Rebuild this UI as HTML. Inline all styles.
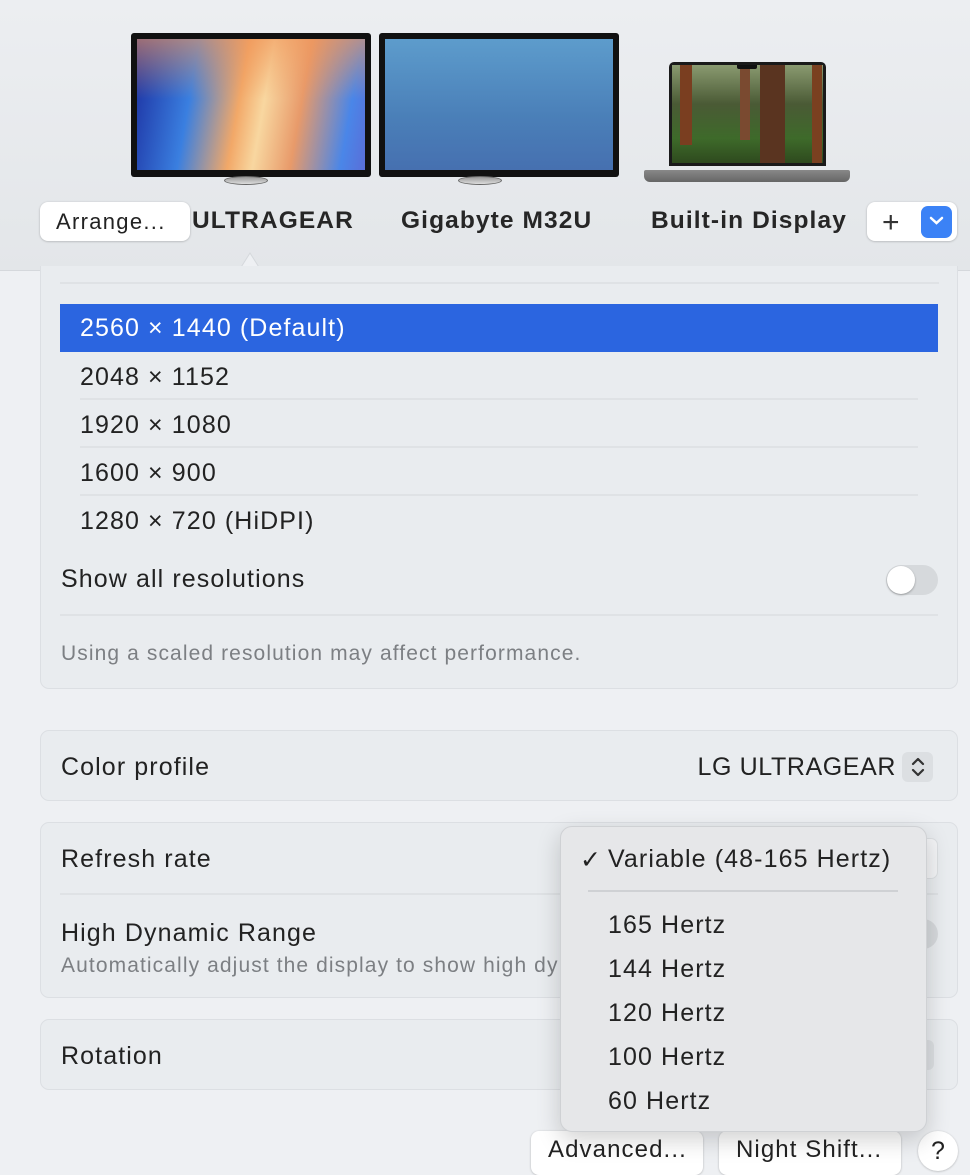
<!DOCTYPE html>
<html><head><meta charset="utf-8"><style>
*{margin:0;padding:0;box-sizing:border-box}
body{width:970px;height:1164px;overflow:hidden;background:#eef0f3;font-family:"Liberation Sans",sans-serif;color:#222;position:relative}
.abs{position:absolute;white-space:nowrap}
.top{left:0;top:0;width:970px;height:271px;background:linear-gradient(#eceef1,#e3e6e9);border-bottom:1px solid #d5d8dc}
.mon{background:#111;border-radius:3px}
.lbl{font-size:24.5px;font-weight:bold;color:#262626;top:207px;letter-spacing:1.1px}
.box{background:#e9ecef;border:1px solid #dcdfe3;border-radius:9px}
.t{font-size:25px;color:#222;letter-spacing:1.1px}
.cap{font-size:21px;color:#7c7f83;letter-spacing:1.1px}
.line{height:2px;background:#dfe2e5}
.btn{background:#fff;border-radius:8px;box-shadow:0 0.5px 2px rgba(0,0,0,.25)}
</style></head><body>
<div class="abs top"></div>
<!-- monitor 1 -->
<div class="abs mon" style="left:131px;top:33px;width:240px;height:144px"></div>
<div class="abs" style="left:137px;top:39px;width:228px;height:131px;background:linear-gradient(100deg,#1c2fa0 0%,#3a7fe0 25%,#f2a868 45%,#f8d7a0 55%,#e89a6a 70%,#4a86e8 90%,#5a6ed8 100%)"></div>
<div class="abs" style="left:137px;top:39px;width:228px;height:60px;background:linear-gradient(180deg,rgba(240,150,90,.6),rgba(0,0,0,0))"></div>
<div class="abs" style="left:224px;top:176px;width:44px;height:9px;border-radius:50%;background:linear-gradient(#999,#ddd);border:1px solid #666"></div>
<!-- monitor 2 -->
<div class="abs mon" style="left:379px;top:33px;width:240px;height:144px"></div>
<div class="abs" style="left:385px;top:39px;width:228px;height:131px;background:linear-gradient(#5d9ccc,#4a7fb8 60%,#4670b0)"></div>
<div class="abs" style="left:458px;top:176px;width:44px;height:9px;border-radius:50%;background:linear-gradient(#999,#ddd);border:1px solid #666"></div>
<!-- laptop -->
<div class="abs" style="left:669px;top:62px;width:157px;height:104px;background:#1a1a1a;border-radius:5px 5px 0 0"></div>
<div class="abs" style="left:672px;top:65px;width:151px;height:98px;background:linear-gradient(#8a9a70 0%,#4a5a35 40%,#3e6a2a 75%,#2e4a1e 100%)"></div>
<div class="abs" style="left:680px;top:65px;width:12px;height:80px;background:#7a3e20"></div>
<div class="abs" style="left:740px;top:65px;width:10px;height:75px;background:#7a4a30"></div>
<div class="abs" style="left:760px;top:65px;width:25px;height:98px;background:#5a3420"></div>
<div class="abs" style="left:812px;top:65px;width:10px;height:98px;background:#7a4020"></div>
<div class="abs" style="left:737px;top:65px;width:20px;height:4px;background:#111;border-radius:0 0 2px 2px"></div>
<div class="abs" style="left:644px;top:170px;width:206px;height:12px;background:linear-gradient(#888,#666);border-radius:2px 2px 6px 6px"></div>
<!-- labels -->
<div class="abs lbl" style="left:192px">ULTRAGEAR</div>
<div class="abs lbl" style="left:401px">Gigabyte M32U</div>
<div class="abs lbl" style="left:651px">Built-in Display</div>
<div class="abs btn" style="left:40px;top:202px;width:150px;height:39px;font-size:22px;letter-spacing:1.3px;padding:7px 0 0 16px">Arrange...</div>
<div class="abs btn" style="left:867px;top:202px;width:90px;height:39px"></div>
<div class="abs" style="left:882px;top:206px;font-size:30px;font-weight:300;color:#333">+</div>
<div class="abs" style="left:921px;top:206px;width:31px;height:32px;background:#3b82f6;border-radius:7px"></div>
<svg class="abs" style="left:929px;top:216px" width="15" height="10"><path d="M2 2 L7.5 7 L13 2" stroke="#fff" stroke-width="2.5" fill="none" stroke-linecap="round"/></svg>
<!-- caret -->
<svg class="abs" style="left:228px;top:251px" width="44" height="22"><path d="M0 21 L10 21 L22 2 L34 21 L44 21" fill="#eef0f3" stroke="#d5d8dc" stroke-width="1"/><rect x="0" y="20.5" width="44" height="2" fill="#eef0f3"/></svg>
<!-- panel -->
<div class="abs box" style="left:40px;top:266px;width:918px;height:423px;border-top:none;border-radius:0 0 9px 9px"></div>
<div class="abs line" style="left:60px;top:282px;width:879px"></div>
<div class="abs" style="left:60px;top:304px;width:878px;height:48px;background:#2b65e0"></div>
<div class="abs t" style="left:80px;top:314px;color:#fff">2560 × 1440 (Default)</div>
<div class="abs t" style="left:80px;top:363px">2048 × 1152</div>
<div class="abs line" style="left:80px;top:398px;width:838px"></div>
<div class="abs t" style="left:80px;top:411px">1920 × 1080</div>
<div class="abs line" style="left:80px;top:446px;width:838px"></div>
<div class="abs t" style="left:80px;top:459px">1600 × 900</div>
<div class="abs line" style="left:80px;top:494px;width:838px"></div>
<div class="abs t" style="left:80px;top:507px">1280 × 720 (HiDPI)</div>
<div class="abs t" style="left:61px;top:565px">Show all resolutions</div>
<div class="abs" style="left:886px;top:565px;width:52px;height:30px;border-radius:15px;background:#d6d9dc"></div>
<div class="abs" style="left:887px;top:566px;width:28px;height:28px;border-radius:50%;background:#fff;box-shadow:0 1px 2px rgba(0,0,0,.3)"></div>
<div class="abs line" style="left:60px;top:614px;width:878px"></div>
<div class="abs cap" style="left:61px;top:642px">Using a scaled resolution may affect performance.</div>
<!-- color profile -->
<div class="abs box" style="left:40px;top:730px;width:918px;height:71px"></div>
<div class="abs t" style="left:61px;top:753px">Color profile</div>
<div class="abs t" style="right:74px;top:753px;letter-spacing:0.6px">LG ULTRAGEAR</div>
<div class="abs" style="left:902px;top:752px;width:31px;height:30px;border-radius:6px;background:#dcdfe2"></div>
<svg class="abs" style="left:910px;top:756px" width="16" height="22"><path d="M3 8 L8 3 L13 8 M3 14 L8 19 L13 14" stroke="#333" stroke-width="2.2" fill="none" stroke-linecap="round" stroke-linejoin="round"/></svg>
<!-- refresh -->
<div class="abs box" style="left:40px;top:822px;width:918px;height:176px"></div>
<div class="abs t" style="left:61px;top:845px">Refresh rate</div>
<div class="abs" style="left:900px;top:838px;width:38px;height:41px;border-radius:7px;background:#f3f4f6;border:1px solid #dcdfe2"></div>
<div class="abs line" style="left:60px;top:893px;width:878px"></div>
<div class="abs t" style="left:61px;top:919px">High Dynamic Range</div>
<div class="abs cap" style="left:61px;top:954px">Automatically adjust the display to show high dy</div>
<div class="abs" style="left:900px;top:919px;width:38px;height:30px;border-radius:15px;background:#d6d9dc"></div>
<!-- rotation -->
<div class="abs box" style="left:40px;top:1019px;width:918px;height:71px"></div>
<div class="abs t" style="left:61px;top:1042px">Rotation</div>
<div class="abs" style="left:900px;top:1040px;width:34px;height:30px;border-radius:6px;background:#dcdfe2"></div>
<!-- bottom buttons -->
<div class="abs btn" style="left:531px;top:1131px;width:172px;height:44px;font-size:24px;letter-spacing:1.1px;padding:5px 0 0 17px">Advanced...</div>
<div class="abs btn" style="left:719px;top:1131px;width:182px;height:44px;font-size:24px;letter-spacing:1.1px;padding:5px 0 0 17px">Night Shift...</div>
<div class="abs btn" style="left:918px;top:1131px;width:40px;height:40px;border-radius:50%;font-size:25px;text-align:center;padding-top:6px">?</div>
<!-- menu -->
<div class="abs" style="left:560px;top:826px;width:367px;height:306px;background:#e6e7e9;border-radius:12px;border:1px solid #cfd1d4;box-shadow:0 8px 24px rgba(0,0,0,.18)"></div>
<div class="abs t" style="left:580px;top:845px">✓</div>
<div class="abs t" style="left:608px;top:845px">Variable (48-165 Hertz)</div>
<div class="abs" style="left:588px;top:890px;width:310px;height:2px;background:#cfd1d4"></div>
<div class="abs t" style="left:608px;top:911px">165 Hertz</div>
<div class="abs t" style="left:608px;top:955px">144 Hertz</div>
<div class="abs t" style="left:608px;top:999px">120 Hertz</div>
<div class="abs t" style="left:608px;top:1043px">100 Hertz</div>
<div class="abs t" style="left:608px;top:1087px">60 Hertz</div>
</body></html>
